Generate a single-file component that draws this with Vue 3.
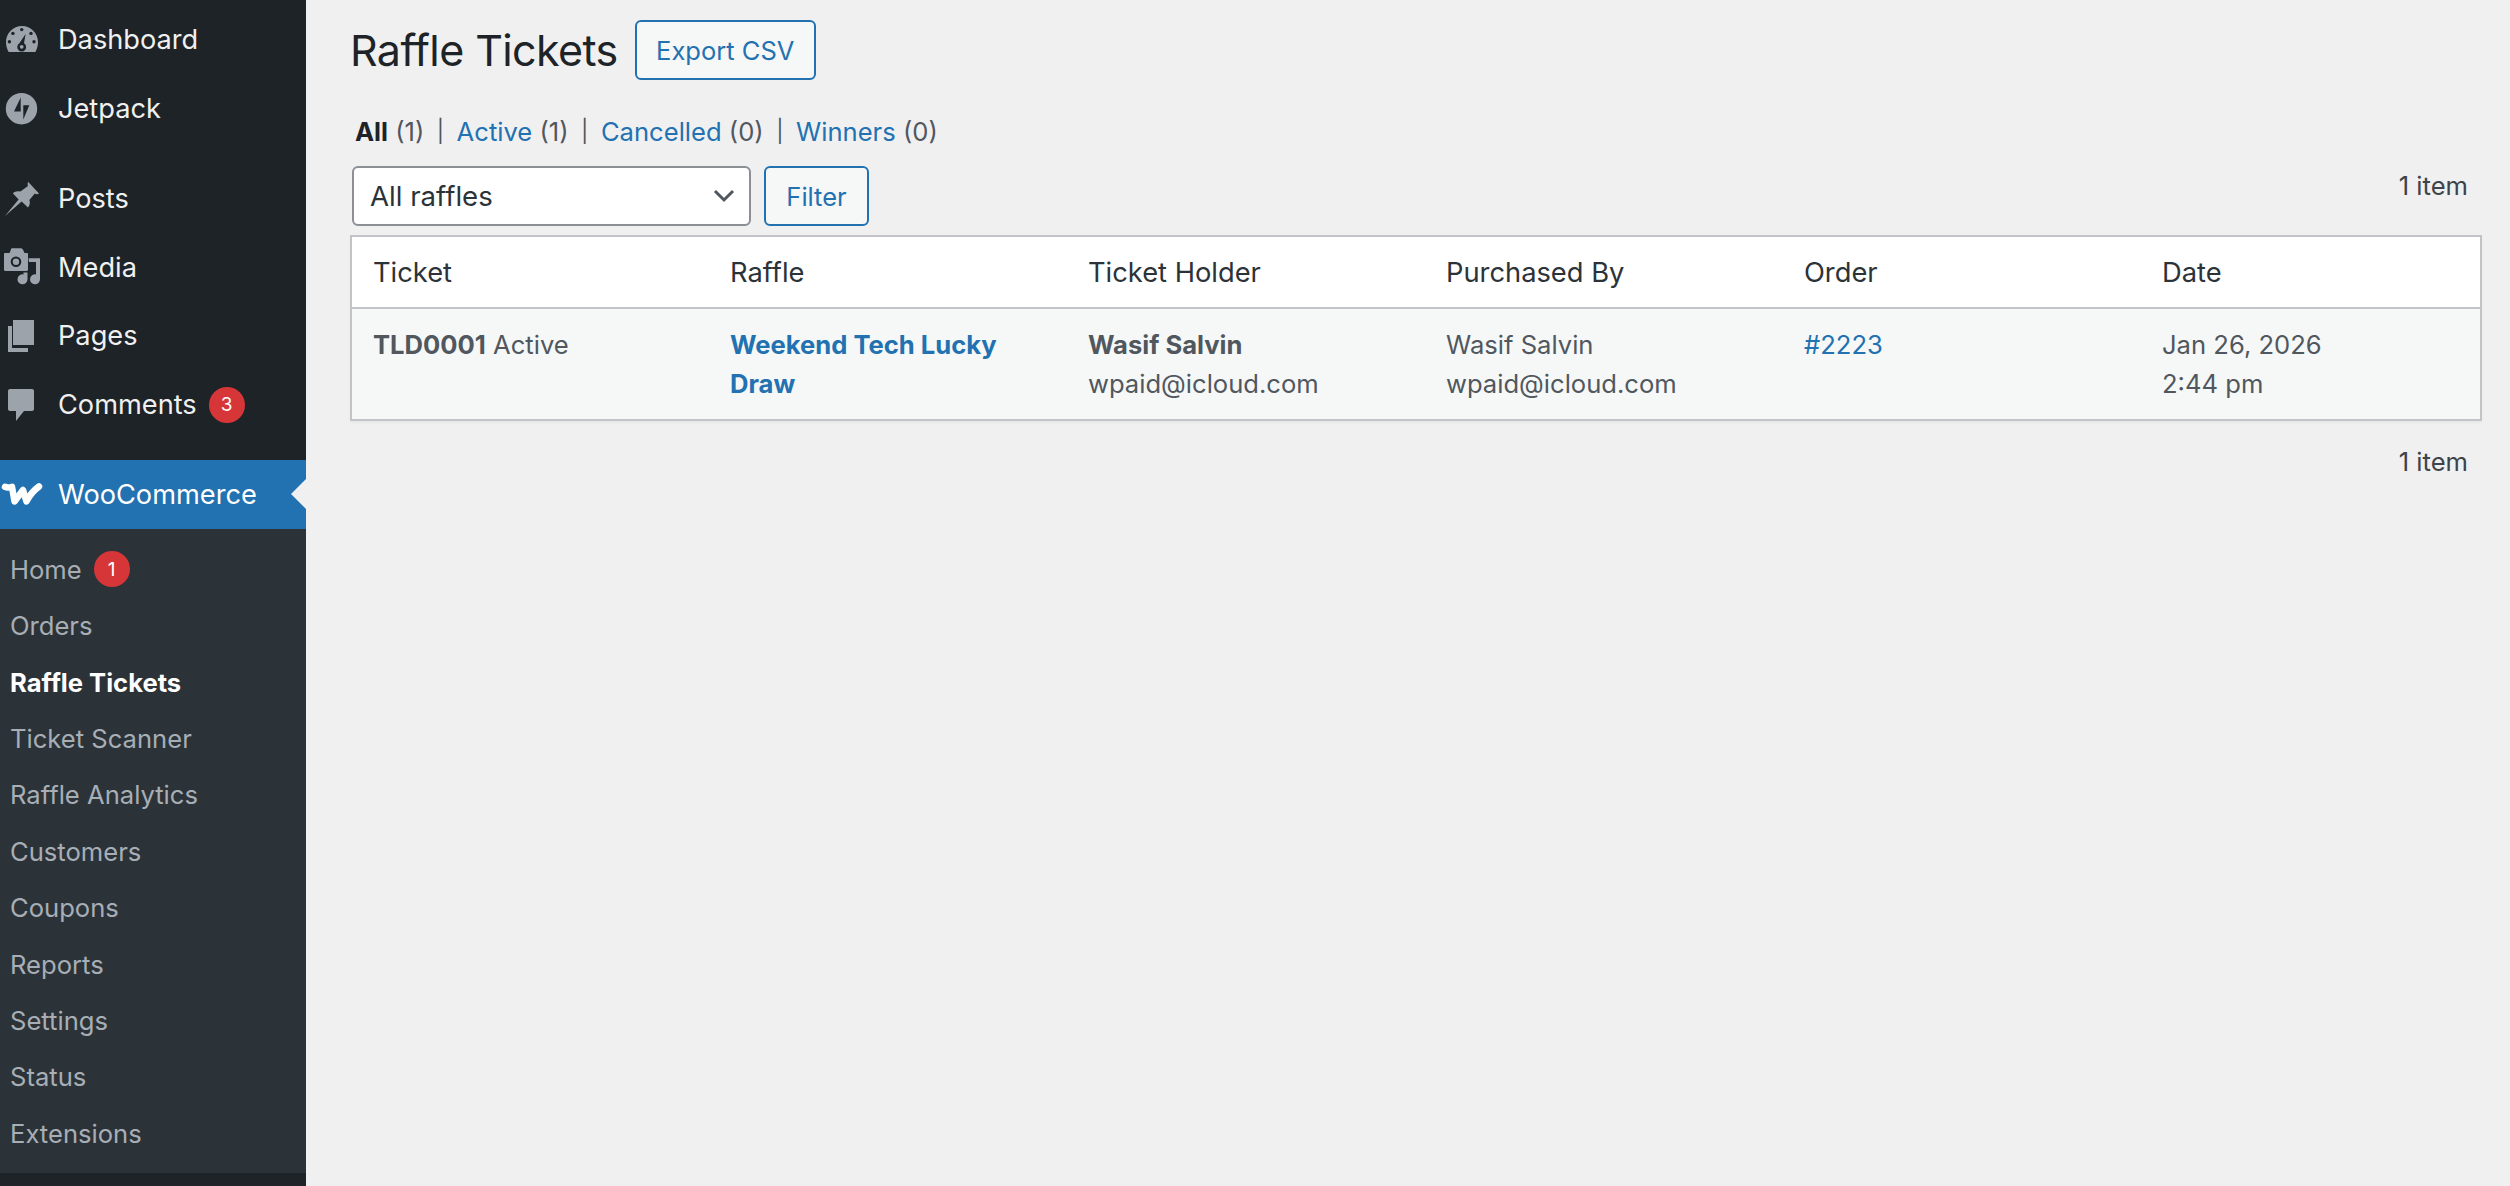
<script setup>
const submenu = ['Home','Orders','Raffle Tickets','Ticket Scanner','Raffle Analytics','Customers','Coupons','Reports','Settings','Status','Extensions']
const columns = ['Ticket','Raffle','Ticket Holder','Purchased By','Order','Date']
</script>

<template>
  <div class="page">
    <aside class="sidebar">
      <nav class="group first">
        <a class="item">
          <svg class="icon" viewBox="0 0 32 32">
            <path fill-rule="evenodd" d="M16 2C7.200 2 0 9.200 0 18c0 3.700 1 7 2.600 10h26.800C31 25 32 21.700 32 18 32 9.200 24.800 2 16 2zM19.600 10L18 19.300A4.400 4.400 0 1 1 13.400 19.300z"/>
            <circle class="hole" cx="15.700" cy="5.600" r="1.700"/>
            <circle class="hole" cx="6.900" cy="9.400" r="1.700"/>
            <circle class="hole" cx="25" cy="9.400" r="1.700"/>
            <circle class="hole" cx="3.400" cy="17.700" r="1.700"/>
            <circle class="hole" cx="28" cy="17.700" r="1.700"/>
            <circle cx="15.700" cy="22.800" r="1.900"/>
          </svg>
          <span>Dashboard</span>
        </a>
        <a class="item">
          <svg class="icon" viewBox="0 0 32 32"><path fill-rule="evenodd" d="M15.500 0a15.700 15.700 0 1 0 0 31.400 15.700 15.700 0 0 0 0-31.400zM14.700 4.500V18.500H8zM17.300 12.200h6L17.300 26.500z"/></svg>
          <span>Jetpack</span>
        </a>
      </nav>
      <nav class="group">
        <a class="item">
          <svg class="icon" viewBox="0 0 32 32"><path d="M22.300 0L33 11.600C31.600 12.600 30 12.400 28.800 11.600L23.400 18C24.400 20.600 23.800 23.400 22 25.400L15.600 19.400-1 34 12.600 17.400 6.800 11.200C8.600 9.400 11.600 8.600 14.400 9.600L22 4C21.400 2.600 21.400 1 22.300 0Z"/></svg>
          <span>Posts</span>
        </a>
        <a class="item">
          <svg class="icon" viewBox="0 0 32 32">
            <path fill-rule="evenodd" d="M6 -2.700h9c1 0 2 .9 2.500 2.500L18.500 2H21c.6 0 1 .4 1 1v15.500c0 .9-.6 1.500-1.500 1.500H-.5C-1.400 20-2 19.400-2 18.500V3c0-.6.400-1 1-1H3.500L4.500-.2C5-1.800 5-2.700 6-2.700zM10 5.500a5.300 5.300 0 1 0 0 10.600 5.300 5.300 0 0 0 0-10.600z"/>
            <circle cx="10" cy="10.800" r="3.200"/>
            <path d="M22.500 7.300H34V28.300a5 5 0 1 1-4-4.900V11H23z"/>
            <path d="M17.500 21.500H21.500V28.300a5 5 0 1 1-4-4.900z"/>
          </svg>
          <span>Media</span>
        </a>
        <a class="item">
          <svg class="icon" viewBox="0 0 32 32"><path d="M7 0H28V25H7zM2 6H6V28H22V32H2z"/></svg>
          <span>Pages</span>
        </a>
        <a class="item">
          <svg class="icon" viewBox="0 0 32 32"><path d="M4 0h22a2 2 0 0 1 2 2v18a2 2 0 0 1-2 2H18L10 32V22H4a2 2 0 0 1-2-2V2a2 2 0 0 1 2-2z"/></svg>
          <span>Comments</span>
          <b class="badge">3</b>
        </a>
      </nav>
      <nav class="group">
        <a class="item current">
          <svg class="woo" viewBox="0 0 40 22"><path d="M3 3.800C5.500 5 7.500 4.600 10 3.800L12.500 18.500 21 7 24.500 18.500C27.500 12 31.500 7.500 37 3.500"/></svg>
          <span>WooCommerce</span>
          <i class="arrow"></i>
        </a>
        <div class="submenu">
          <a v-for="name in submenu" :key="name" class="sub" :class="{ active: name === 'Raffle Tickets' }">
            {{ name }}<b v-if="name === 'Home'" class="badge">1</b>
          </a>
        </div>
      </nav>
    </aside>

    <main class="main">
      <header class="heading">
        <h1>Raffle Tickets</h1>
        <button class="btn export">Export CSV</button>
      </header>
      <ul class="views">
        <li><strong>All</strong> <em>(1)</em></li>
        <li class="sep">|</li>
        <li><a>Active</a> <em>(1)</em></li>
        <li class="sep">|</li>
        <li><a>Cancelled</a> <em>(0)</em></li>
        <li class="sep">|</li>
        <li><a>Winners</a> <em>(0)</em></li>
      </ul>
      <div class="tablenav">
        <div class="select">
          <span>All raffles</span>
          <svg viewBox="0 0 24 24"><path d="M3 7l9 9 9-9" fill="none" stroke="#50575e" stroke-width="3"/></svg>
        </div>
        <button class="btn filter">Filter</button>
        <span class="count">1 item</span>
      </div>
      <table>
        <thead>
          <tr><th v-for="c in columns" :key="c">{{ c }}</th></tr>
        </thead>
        <tbody>
          <tr>
            <td><strong>TLD0001</strong> Active</td>
            <td><a class="bold">Weekend Tech Lucky Draw</a></td>
            <td><strong>Wasif Salvin</strong><br>wpaid@icloud.com</td>
            <td>Wasif Salvin<br>wpaid@icloud.com</td>
            <td><a>#2223</a></td>
            <td>Jan 26, 2026<br>2:44 pm</td>
          </tr>
        </tbody>
      </table>
      <div class="bottom"><span class="count">1 item</span></div>
    </main>
  </div>
</template>

<style>
html, body { margin: 0; background: #f0f0f1; overflow: hidden; }
</style>

<style scoped>
.page { display: flex; height: 1186px; font-family: Inter, "Liberation Sans", sans-serif; font-size: 25.600px; color: #3c434a; background: #f0f0f1; }
.sidebar { width: 306px; flex: none; background: #1d2327; color: #f0f0f1; padding-top: 5.600px; box-sizing: border-box; overflow: hidden; }
.group { display: block; margin-top: 20.800px; }
.group.first { margin-top: 0; }
.item { display: flex; align-items: center; height: 68.800px; font-size: 27.200px; position: relative; padding-left: 6px; box-sizing: border-box; }
.icon { width: 32px; height: 32px; fill: #9ca3ab; flex: none; margin-right: 20px; overflow: visible; }
.hole { fill: #1d2327; }
.woo { width: 40px; height: 22px; fill: none; stroke: #fff; stroke-width: 6.500; stroke-linejoin: round; stroke-linecap: round; flex: none; margin: 0 16px 0 -4px; overflow: visible; }
.current { background: #2271b1; color: #fff; }
.arrow { position: absolute; right: 0; top: 19px; border: 15.500px solid transparent; border-right-color: #f0f0f1; border-left-width: 0; }
.badge { display: inline-flex; align-items: center; justify-content: center; width: 36px; height: 36px; border-radius: 50%; background: #d63638; color: #fff; font-size: 19px; font-weight: 400; margin-left: 12px; }
.submenu { background: #2c3338; padding: 12.400px 0 11.100px; }
.sub { display: flex; align-items: center; height: 56.400px; padding-left: 10px; font-size: 25.600px; color: #a7aeb6; }
.sub.active { color: #fff; font-weight: 700; }
.main { flex: 1; padding: 0 28px 0 44px; min-width: 0; }
.heading { display: flex; align-items: center; height: 60px; margin-top: 20px; gap: 17px; }
h1 { margin: 0; font-size: 43px; font-weight: 400; letter-spacing: -.6px; color: #1d2327; }
.btn { box-sizing: border-box; height: 60px; border: 2px solid #2271b1; border-radius: 6px; background: #f6f7f7; color: #2271b1; font: inherit; font-size: 25.500px; padding: 0; }
.export { width: 181px; }
.filter { width: 105px; margin-left: 13px; }
.views { list-style: none; display: flex; margin: 30px 0 0; padding: 0 0 0 5px; height: 42px; align-items: center; font-size: 25.600px; color: #50575e; gap: 12.500px; white-space: pre; }
.views em { font-style: normal; }
.views strong { color: #1d2327; font-weight: 700; }
.views a, td a { color: #2271b1; }
.sep { font-size: 22px; color: #50575e; }
.tablenav { display: flex; align-items: center; margin: 14px 0 0 2px; height: 60px; position: relative; }
.select { box-sizing: border-box; width: 399px; height: 60px; background: #fff; border: 2px solid #8c8f94; border-radius: 6px; display: flex; align-items: center; justify-content: space-between; padding: 0 13px 0 16px; font-size: 27.600px; color: #2c3338; }
.select svg { width: 24px; height: 24px; }
.count { color: #3c434a; font-size: 25.600px; }
.tablenav .count { position: absolute; right: 14px; top: 0; line-height: 40px; }
table { width: 2132px; margin-top: 9px; border-collapse: collapse; table-layout: fixed; background: #f6f7f7; border: 2px solid #c3c4c7; box-shadow: 0 2px 2px rgba(0,0,0,.04); }
th { width: 358px; height: 72px; padding: 0 20px 0 21px; box-sizing: border-box; text-align: left; font-weight: 400; background: #fff; color: #2c3338; border-bottom: 2px solid #c3c4c7; font-size: 27.300px; }
th:last-child { width: auto; }
td { padding: 16px 20px 16px 21px; vertical-align: top; line-height: 39px; color: #50575e; font-size: 25.600px; }
td a.bold { font-weight: 700; }
td strong { font-weight: 700; }
.bottom { display: flex; justify-content: flex-end; padding-right: 14px; margin-top: 21px; line-height: 40px; }
</style>
